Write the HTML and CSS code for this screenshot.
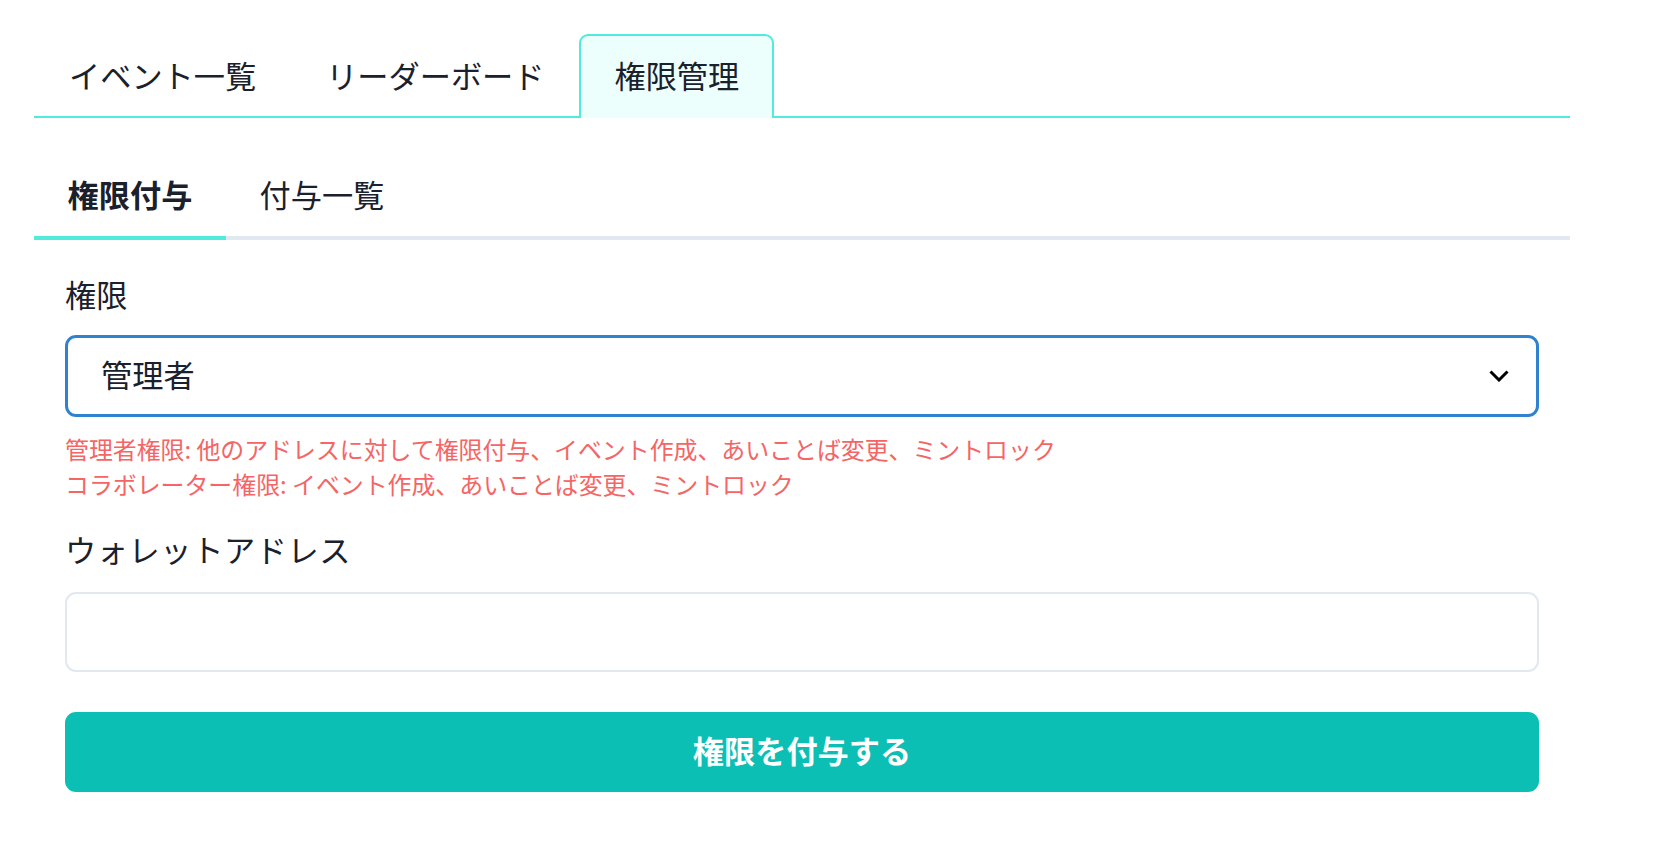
FILE: index.html
```html
<!DOCTYPE html>
<html lang="ja">
<head>
<meta charset="utf-8">
<title>権限管理</title>
<link rel="stylesheet" href="styles.css">
</head>
<body>
<div class="page">
  <nav class="tabs">
    <div class="tab">イベント一覧</div>
    <div class="tab">リーダーボード</div>
    <div class="tab tab-active">権限管理</div>
  </nav>
  <div class="subtabs">
    <div class="subtab subtab-active">権限付与</div>
    <div class="subtab">付与一覧</div>
  </div>
  <div class="panel">
    <div class="label label-first">権限</div>
    <div class="select">
      <span class="select-value">管理者</span>
      <svg class="chevron" width="20" height="12" viewBox="0 0 20 12"><path d="M1.5 1.5 L10 10 L18.5 1.5" fill="none" stroke="#000" stroke-width="3"/></svg>
    </div>
    <div class="help">
      <div>管理者権限: 他のアドレスに対して権限付与、イベント作成、あいことば変更、ミントロック</div>
      <div>コラボレーター権限: イベント作成、あいことば変更、ミントロック</div>
    </div>
    <div class="label label-second">ウォレットアドレス</div>
    <div class="input"></div>
    <button class="submit">権限を付与する</button>
  </div>
</div>
</body>
</html>
```
FILE: styles.css
```css
* { box-sizing: border-box; }
html, body { margin: 0; padding: 0; background: #ffffff; }
body {
  font-family: "Noto Sans CJK JP", "Noto Sans", sans-serif;
  color: #1a202c;
  font-size: 31.2px;
}
.page {
  width: 1536px;
  margin-left: 34px;
  padding-top: 34px;
}
.tabs {
  display: flex;
  border-bottom: 2px solid #50ebdb;
  height: 84px;
}
.tab {
  height: 84px;
  margin-bottom: -2px;
  padding: 0 33px 4px;
  border: 2px solid transparent;
  border-bottom: 0;
  border-radius: 9px 9px 0 0;
  display: flex;
  align-items: center;
  line-height: 40px;
  white-space: nowrap;
}
.tab-active {
  border-color: #50ebdb;
  background: #edfffc;
}
.subtabs {
  margin-top: 38px;
  display: flex;
  border-bottom: 4px solid #e2e8f0;
  height: 84px;
}
.subtab {
  height: 84px;
  margin-bottom: -4px;
  padding: 0 33.6px 4px;
  border-bottom: 4px solid transparent;
  display: flex;
  align-items: center;
  line-height: 40px;
  white-space: nowrap;
}
.subtab-active {
  font-weight: 700;
  border-bottom-color: #50ebdb;
}
.panel {
  padding: 0 31px 0 31px;
}
.label {
  line-height: 44px;
}
.label-first { margin-top: 32px; }
.label-second {
  margin-top: 26px;
  letter-spacing: 0.6px;
}
.select {
  margin-top: 19px;
  height: 82px;
  border: 3px solid #3182ce;
  border-radius: 11px;
  display: flex;
  align-items: center;
  justify-content: space-between;
  padding: 0 27px 0 33px;
}
.select-value {
  line-height: 40px;
  margin-top: -4px;
}
.chevron { display: block; }
.help {
  margin-top: 14px;
  color: #f56565;
  font-size: 23.9px;
  line-height: 35px;
}
.input {
  margin-top: 21px;
  height: 80px;
  border: 2px solid #e2e8f0;
  border-radius: 11px;
}
.submit {
  margin-top: 40px;
  display: block;
  width: 100%;
  height: 80px;
  border: 0;
  border-radius: 11px;
  background: #0cbfb4;
  color: #ffffff;
  font-family: "Noto Sans CJK JP", "Noto Sans", sans-serif;
  font-size: 31.2px;
  font-weight: 700;
  line-height: 40px;
  padding: 0 0 4px;
}
```
